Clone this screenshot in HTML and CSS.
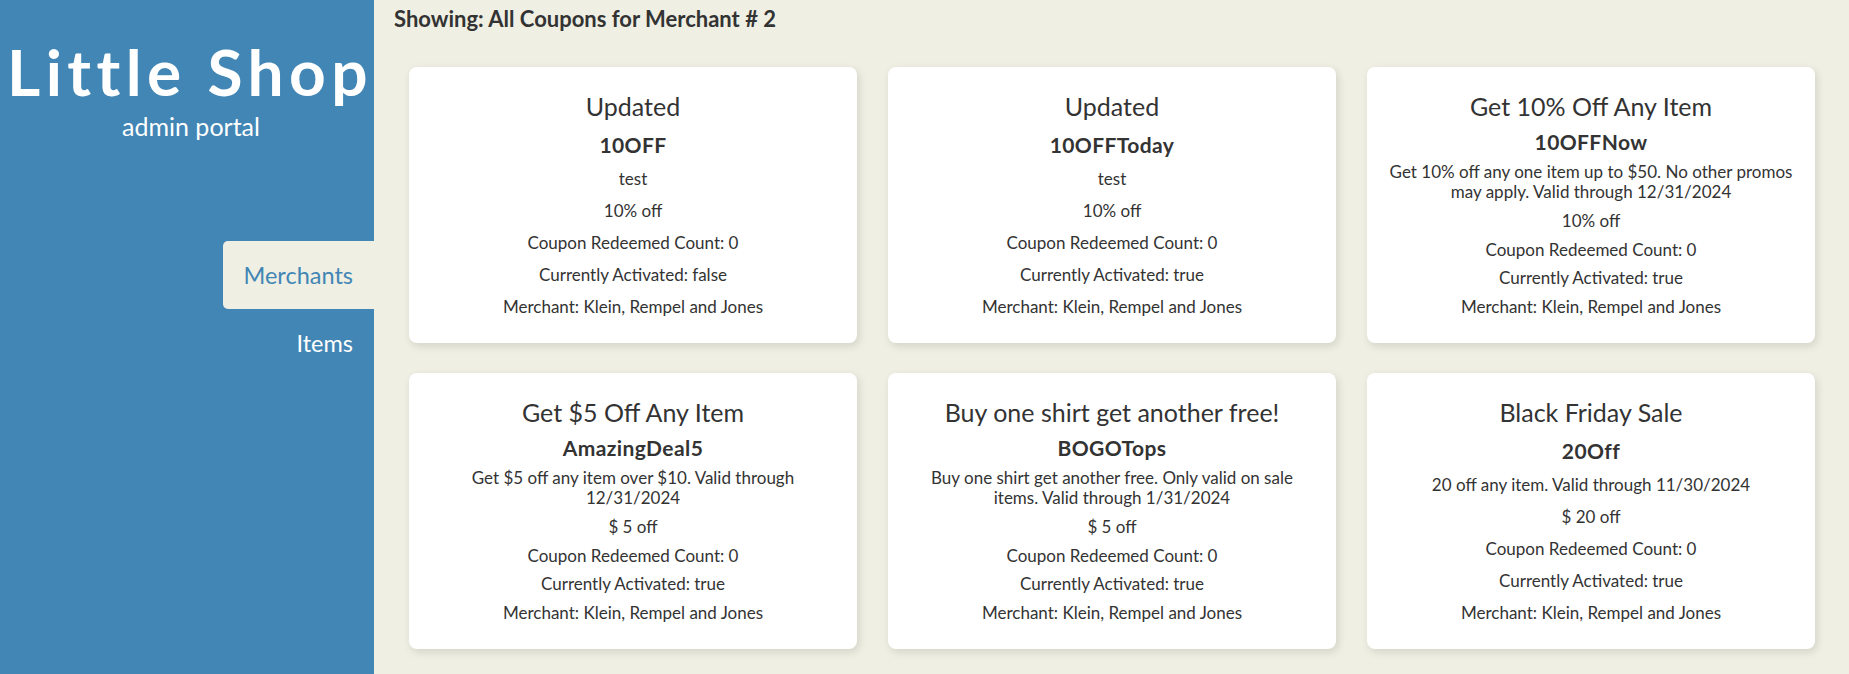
FILE: index.html
```html
<!DOCTYPE html>
<html lang="en">
<head>
<meta charset="utf-8">
<title>Little Shop</title>
<link rel="stylesheet" href="styles.css">
</head>
<body>
<div class="app">
  <aside class="sidebar">
    <h1 class="brand">Little Shop</h1>
    <p class="subtitle">admin portal</p>
    <nav class="nav">
      <a class="nav-link active" href="#">Merchants</a>
      <a class="nav-link" href="#">Items</a>
    </nav>
  </aside>
  <main class="main">
    <h2 class="showing">Showing: All Coupons for Merchant # 2</h2>
    <section class="grid">
      <article class="card">
        <h3 class="card-title">Updated</h3>
        <p class="code">10OFF</p>
        <p class="line">test</p>
        <p class="line">10% off</p>
        <p class="line">Coupon Redeemed Count: 0</p>
        <p class="line">Currently Activated: false</p>
        <p class="line">Merchant: Klein, Rempel and Jones</p>
      </article>
      <article class="card">
        <h3 class="card-title">Updated</h3>
        <p class="code">10OFFToday</p>
        <p class="line">test</p>
        <p class="line">10% off</p>
        <p class="line">Coupon Redeemed Count: 0</p>
        <p class="line">Currently Activated: true</p>
        <p class="line">Merchant: Klein, Rempel and Jones</p>
      </article>
      <article class="card">
        <h3 class="card-title">Get 10% Off Any Item</h3>
        <p class="code">10OFFNow</p>
        <p class="line desc">Get 10% off any one item up to $50. No other promos may apply. Valid through 12/31/2024</p>
        <p class="line">10% off</p>
        <p class="line">Coupon Redeemed Count: 0</p>
        <p class="line">Currently Activated: true</p>
        <p class="line">Merchant: Klein, Rempel and Jones</p>
      </article>
      <article class="card">
        <h3 class="card-title">Get $5 Off Any Item</h3>
        <p class="code">AmazingDeal5</p>
        <p class="line desc">Get $5 off any item over $10. Valid through 12/31/2024</p>
        <p class="line">$ 5 off</p>
        <p class="line">Coupon Redeemed Count: 0</p>
        <p class="line">Currently Activated: true</p>
        <p class="line">Merchant: Klein, Rempel and Jones</p>
      </article>
      <article class="card">
        <h3 class="card-title">Buy one shirt get another free!</h3>
        <p class="code">BOGOTops</p>
        <p class="line desc">Buy one shirt get another free. Only valid on sale items. Valid through 1/31/2024</p>
        <p class="line">$ 5 off</p>
        <p class="line">Coupon Redeemed Count: 0</p>
        <p class="line">Currently Activated: true</p>
        <p class="line">Merchant: Klein, Rempel and Jones</p>
      </article>
      <article class="card">
        <h3 class="card-title">Black Friday Sale</h3>
        <p class="code">20Off</p>
        <p class="line">20 off any item. Valid through 11/30/2024</p>
        <p class="line">$ 20 off</p>
        <p class="line">Coupon Redeemed Count: 0</p>
        <p class="line">Currently Activated: true</p>
        <p class="line">Merchant: Klein, Rempel and Jones</p>
      </article>
    </section>
  </main>
</div>
</body>
</html>
```
FILE: styles.css
```css
* { box-sizing: border-box; }

html, body {
  margin: 0;
  padding: 0;
  height: 100%;
}

body {
  font-family: "Lato", "Noto Sans", sans-serif;
  color: #333333;
  background: #efefe3;
}

.app {
  display: flex;
  min-height: 674px;
}

.sidebar {
  width: 374px;
  flex-shrink: 0;
  background: #4286b5;
  color: #ffffff;
  display: flex;
  flex-direction: column;
  align-items: stretch;
  padding-top: 32px;
}

.brand {
  margin: 0;
  font-size: 64px;
  line-height: 80px;
  font-weight: 700;
  letter-spacing: 5.4px;
  text-align: center;
  white-space: nowrap;
  padding-left: 6px;
}

.subtitle {
  margin: 0;
  font-size: 25px;
  line-height: 28px;
  text-align: center;
  padding-left: 8px;
}

.nav {
  margin-top: 101px;
  display: flex;
  flex-direction: column;
  align-items: flex-end;
}

.nav-link {
  display: block;
  height: 68px;
  line-height: 68px;
  padding: 0 21px;
  font-size: 23.5px;
  color: #ffffff;
  text-decoration: none;
  border-radius: 5px 0 0 5px;
}

.nav-link.active {
  background: #efefe3;
  color: #4286b5;
}

.main {
  flex: 1;
  padding: 0 34px 0 20px;
}

.showing {
  margin: 7px 0 0 0;
  font-size: 22px;
  line-height: 24px;
  font-weight: 700;
  color: #333333;
}

.grid {
  margin: 36px 0 0 15px;
  display: grid;
  grid-template-columns: repeat(3, 1fr);
  column-gap: 31px;
  row-gap: 30px;
}

.card {
  height: 276px;
  background: #ffffff;
  border-radius: 8px;
  box-shadow: 2px 3px 8px rgba(0, 0, 0, 0.12);
  padding: 24px 20px 26px;
  display: flex;
  flex-direction: column;
  justify-content: space-between;
  text-align: center;
}

.card-title {
  margin: 0;
  font-size: 25px;
  line-height: 30px;
  font-weight: 400;
}

.code {
  margin: 0;
  font-size: 21px;
  line-height: 24px;
  font-weight: 700;
  letter-spacing: 0.4px;
}

.line {
  margin: 0;
  font-size: 17px;
  line-height: 20px;
}
```
